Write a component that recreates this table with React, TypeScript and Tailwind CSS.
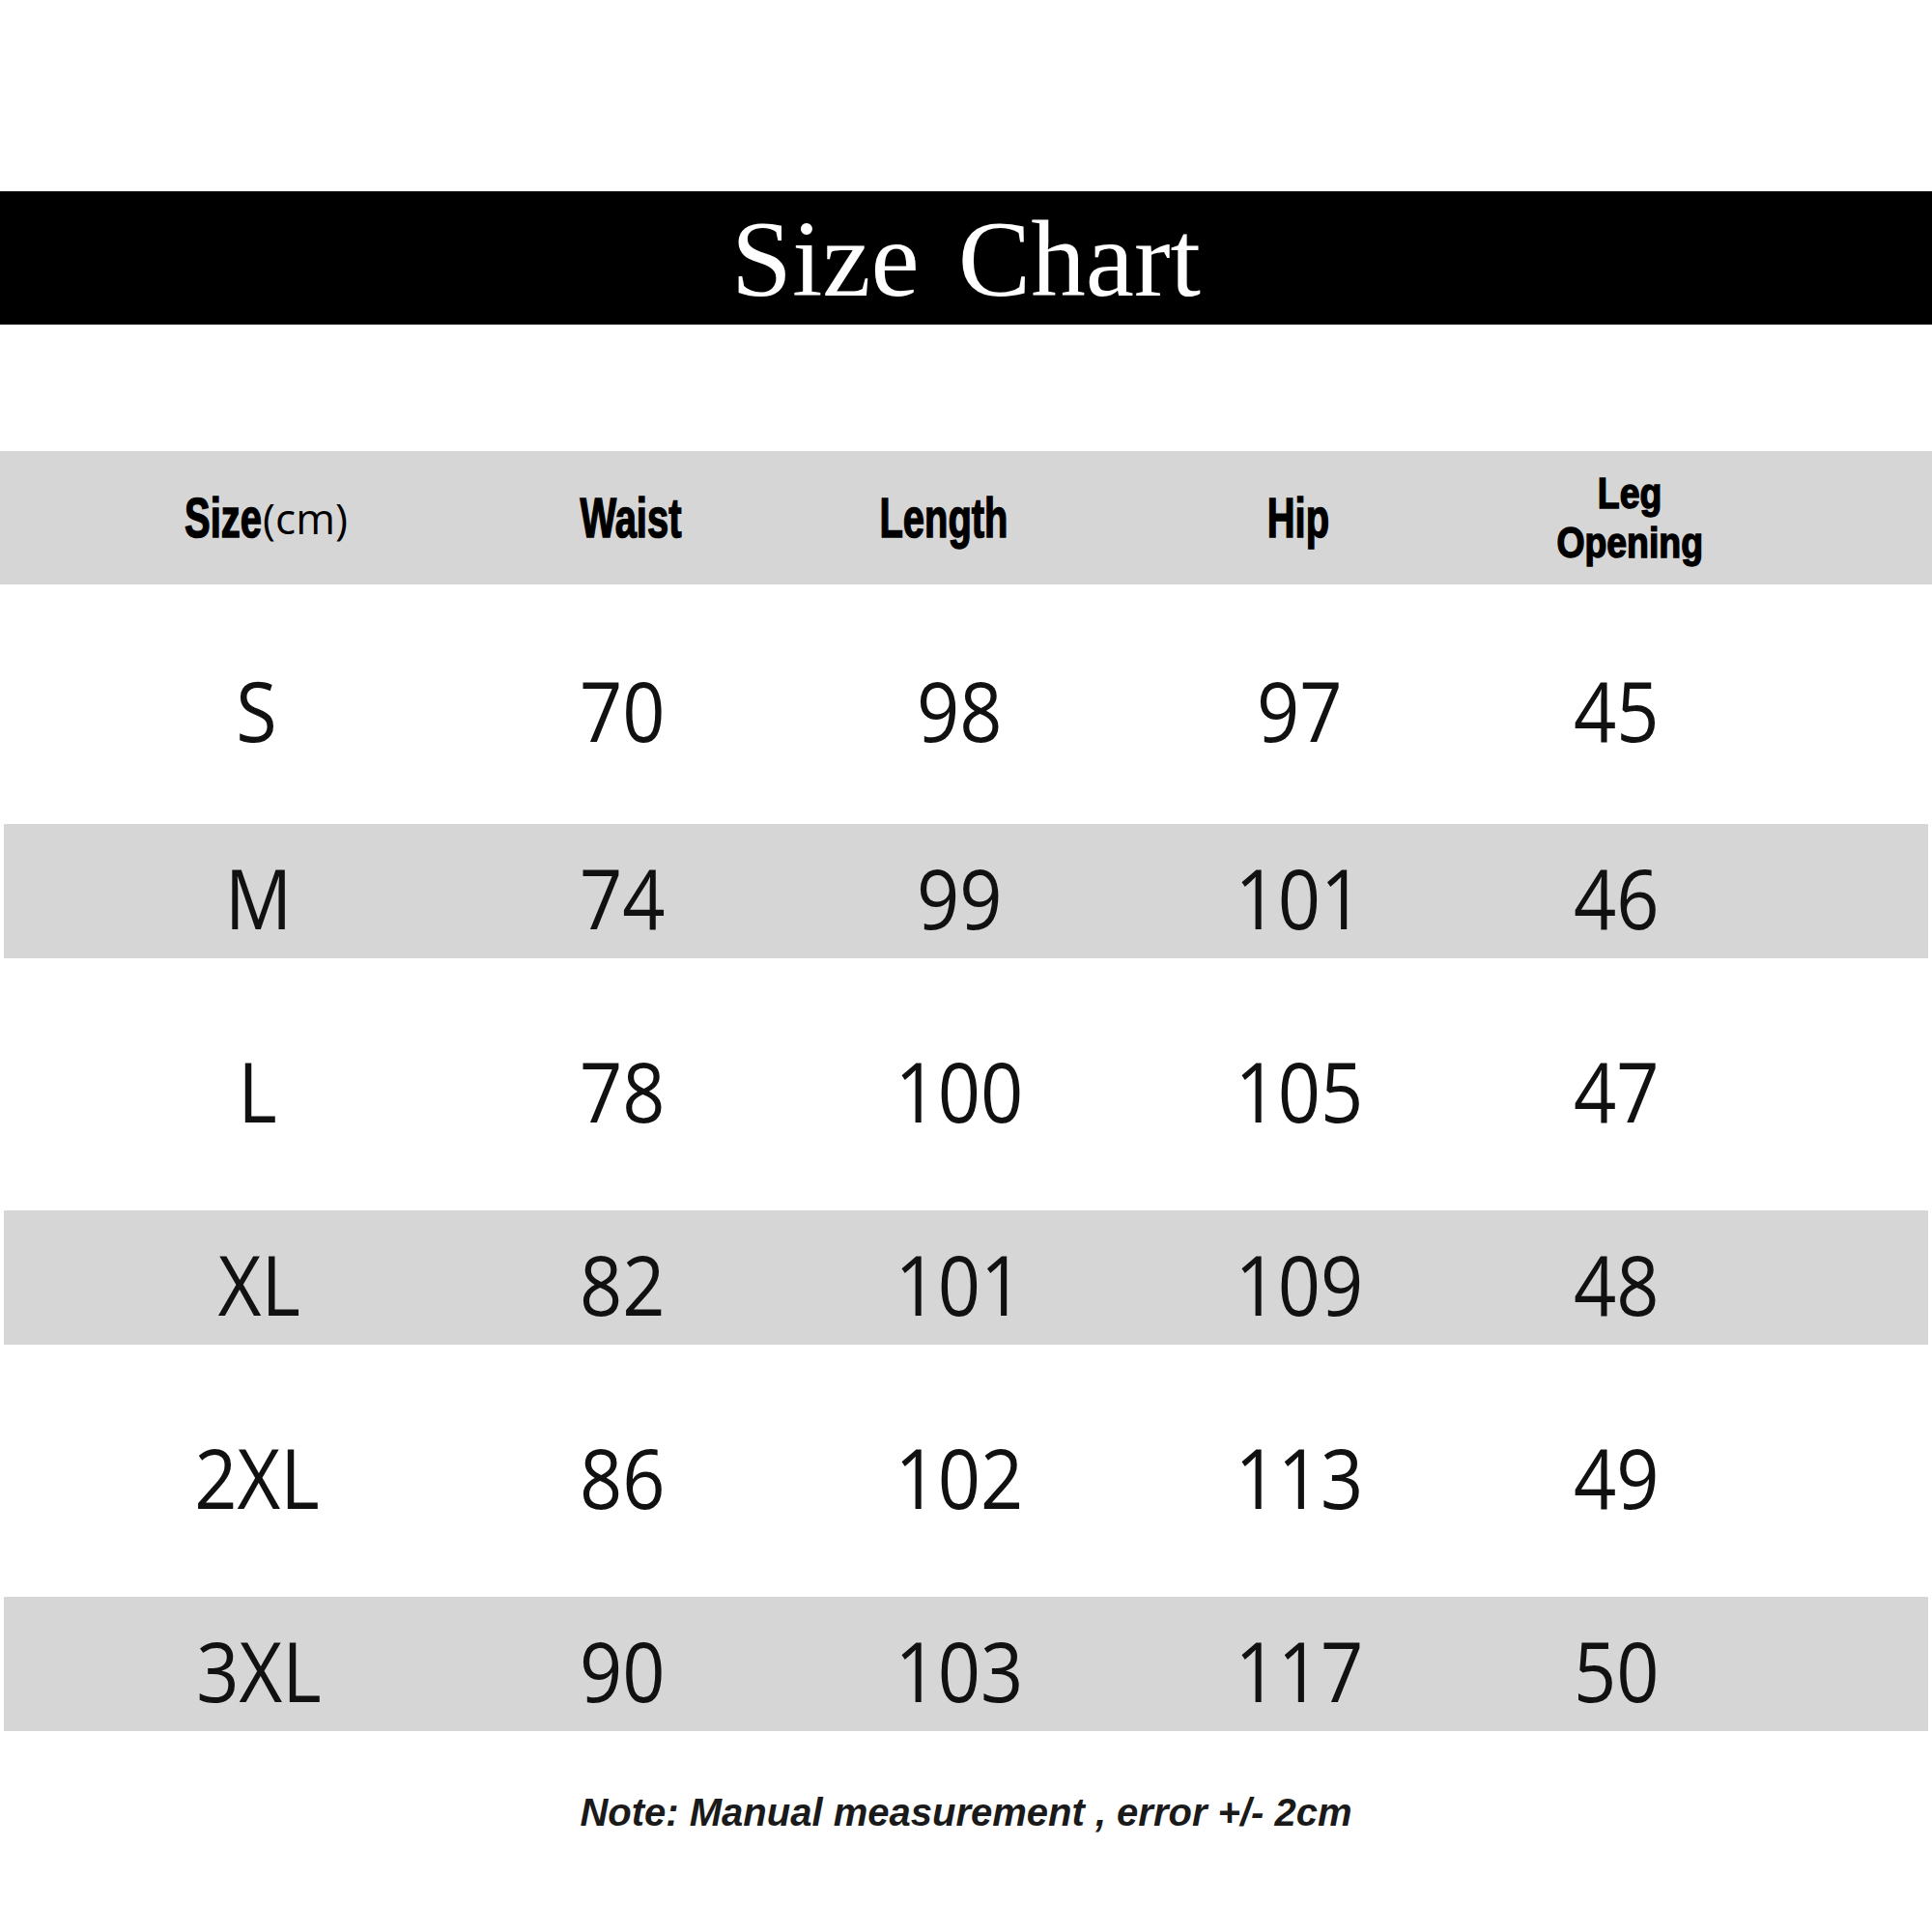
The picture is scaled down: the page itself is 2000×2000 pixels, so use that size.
const sizes = [
  { size: 'S', waist: '70', length: '98', hip: '97', leg: '45', shaded: false, tall: 'h-[248px]' },
  { size: 'M', waist: '74', length: '99', hip: '101', leg: '46', shaded: true, tall: 'h-[139px]' },
  { size: 'L', waist: '78', length: '100', hip: '105', leg: '47', shaded: false, tall: 'h-[261px]' },
  { size: 'XL', waist: '82', length: '101', hip: '109', leg: '48', shaded: true, tall: 'h-[139px]' },
  { size: '2XL', waist: '86', length: '102', hip: '113', leg: '49', shaded: false, tall: 'h-[261px]' },
  { size: '3XL', waist: '90', length: '103', hip: '117', leg: '50', shaded: true, tall: 'h-[139px]' },
];

const Head = ({ children }: { children: React.ReactNode }) => (
  <div className="flex justify-center">
    <span className="inline-block scale-x-[0.7] font-['Liberation_Sans',Arial,sans-serif] font-bold text-[57px] leading-none text-black [-webkit-text-stroke:1.5px_black] whitespace-nowrap">
      {children}
    </span>
  </div>
);

const Cell = ({ value }: { value: string }) => (
  <div className="flex justify-center pt-[12px]">
    <span className="inline-block scale-x-[0.9] font-['Open_Sans',sans-serif] text-[86px] leading-none text-[#111]">
      {value}
    </span>
  </div>
);

export default function App() {
  return (
    <div className="w-[2000px] h-[2000px] bg-white flex flex-col">
      <div className="h-[198px]" />

      <div className="h-[138px] bg-black flex items-center justify-center">
        <h1 className="font-['Liberation_Serif',serif] text-[113px] leading-none text-white [word-spacing:12px]">
          Size Chart
        </h1>
      </div>

      <div className="h-[131px]" />

      <div className="h-[138px] bg-[#d6d6d6] grid grid-cols-[550px_206px_442px_292px_394px_1fr] items-center">
        <div className="flex justify-center items-center">
          <span className="inline-flex items-center">
            <span className="flex justify-center w-[82px]">
              <span className="inline-block shrink-0 scale-x-[0.7] font-['Liberation_Sans',Arial,sans-serif] font-bold text-[57px] leading-none text-black [-webkit-text-stroke:1.5px_black]">
                Size
              </span>
            </span>
            <span className="font-['Open_Sans',sans-serif] text-[44px] leading-none text-black">(cm)</span>
          </span>
        </div>
        <Head>Waist</Head>
        <Head>Length</Head>
        <Head>Hip</Head>
        <div className="flex flex-col items-center">
          <span className="inline-block scale-x-[0.85] font-['Liberation_Sans',Arial,sans-serif] font-bold text-[44px] leading-[51px] h-[51px] text-black [-webkit-text-stroke:1.5px_black]">
            Leg
          </span>
          <span className="inline-block scale-x-[0.85] font-['Liberation_Sans',Arial,sans-serif] font-bold text-[44px] leading-[51px] h-[51px] text-black [-webkit-text-stroke:1.5px_black]">
            Opening
          </span>
        </div>
        <div />
      </div>

      {sizes.map(row => (
        <div
          key={row.size}
          className={
            row.shaded
              ? `${row.tall} bg-[#d6d6d6] mx-[4px] grid grid-cols-[528px_224px_474px_230px_426px_1fr] items-center`
              : `${row.tall} bg-white grid grid-cols-[532px_224px_474px_230px_426px_1fr] items-center`
          }
        >
          <Cell value={row.size} />
          <Cell value={row.waist} />
          <Cell value={row.length} />
          <Cell value={row.hip} />
          <Cell value={row.leg} />
          <div />
        </div>
      ))}

      <p className="mt-[64px] text-center font-['Liberation_Sans',Arial,sans-serif] font-bold italic text-[40px] leading-none text-[#1a1a1a]">
        Note: Manual measurement , error +/- 2cm
      </p>
    </div>
  );
}
